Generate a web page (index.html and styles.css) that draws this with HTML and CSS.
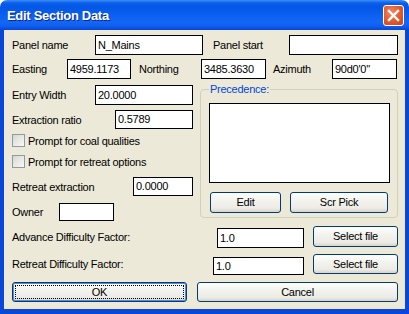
FILE: index.html
```html
<!DOCTYPE html>
<html>
<head>
<meta charset="utf-8">
<link rel="stylesheet" href="styles.css">
</head>
<body>
<div class="window">
  <div class="titlebar">
    <span class="title">Edit Section Data</span>
    <span class="close"><svg width="21" height="21" viewBox="0 0 21 21"><path d="M6 6 L15 15 M15 6 L6 15" stroke="#fff" stroke-width="2.4" stroke-linecap="square"/></svg></span>
  </div>
  <div class="client">
    <div class="row r1">
      <span class="lbl w83">Panel name</span><span class="edit w108 h20">N_Mains</span>
      <span class="lbl ml10 w76">Panel start</span><span class="edit w109 h20"></span>
    </div>
    <div class="row r2">
      <span class="lbl w55">Easting</span><span class="edit w64 h20">4959.1173</span>
      <span class="lbl ml8 w62">Northing</span><span class="edit w65 h20">3485.3630</span>
      <span class="lbl ml7 w59">Azimuth</span><span class="edit w65 h20">90d0'0"</span>
    </div>
    <div class="middle">
      <div class="leftcol">
        <div class="row"><span class="lbl w83">Entry Width</span><span class="edit w98 h20">20.0000</span></div>
        <div class="row mt5"><span class="lbl w103">Extraction ratio</span><span class="edit w78 h19">0.5789</span></div>
        <div class="check mt5"><span class="box"></span><span class="ctext">Prompt for coal qualities</span></div>
        <div class="check mt8"><span class="box"></span><span class="ctext">Prompt for retreat options</span></div>
        <div class="row mt9"><span class="lbl w121">Retreat extraction</span><span class="edit w60 h19">0.0000</span></div>
        <div class="row mt7"><span class="lbl w47">Owner</span><span class="edit w55 h18"></span></div>
      </div>
      <fieldset class="group">
        <legend>Precedence:</legend>
        <div class="listbox"></div>
        <div class="btnrow">
          <span class="btn w71 h21 ml1">Edit</span>
          <span class="btn w98 h21 ml9">Scr Pick</span>
        </div>
      </fieldset>
    </div>
    <div class="row adv">
      <span class="lbl w205 tall">Advance Difficulty Factor:</span>
      <span class="edit w87 h20 down2">1.0</span>
      <span class="btn w85 h21 ml9">Select file</span>
    </div>
    <div class="row ret">
      <span class="lbl w201 tall">Retreat Difficulty Factor:</span>
      <span class="edit w91 h18 down3">1.0</span>
      <span class="btn w85 h20 ml9">Select file</span>
    </div>
    <div class="row okrow">
      <span class="btn default w175 h20">OK</span>
      <span class="btn w201 h20 ml10">Cancel</span>
    </div>
  </div>
</div>
</body>
</html>
```

FILE: styles.css
```css
* { box-sizing: border-box; }
html, body { margin: 0; padding: 0; background: #fff; }
body { font-family: "Liberation Sans", Arial, sans-serif; font-size: 11px; color: #000; }

.window { width: 409px; height: 314px; display: flex; flex-direction: column; }

.titlebar {
  height: 30px;
  display: flex; align-items: center; justify-content: space-between;
  padding: 0 5px 0 7px;
  border-radius: 7px 7px 0 0;
  background: linear-gradient(to bottom, #3d8ffb 0px, #0b5fe9 3px, #0457e6 7px, #0a5fee 14px, #1467f5 22px, #0f5ff0 26px, #0845d6 30px);
}
.title {
  color: #fff; font-weight: bold; font-size: 13px; letter-spacing: -0.3px;
  text-shadow: 1px 1px 0 #0a2a8a;
  margin-top: 1px;
}
.close {
  width: 21px; height: 21px; display: flex;
  border: 1px solid #fff; border-radius: 3px;
  background: radial-gradient(circle at 40% 35%, #f08a64 0%, #e2582c 55%, #c8431c 100%);
  align-items: center; justify-content: center;
}
.close svg { display: block; margin: -1px; }

.client {
  flex: 1;
  background: #ece9d8;
  border-left: 4px solid #0a46d8;
  border-right: 4px solid #0a46d8;
  border-bottom: 5px solid #0a46d8;
  padding: 0 0 0 8px;
  display: flex; flex-direction: column;
  letter-spacing: -0.25px;
}

.row { display: flex; align-items: center; }
.r1 { margin-top: 5px; height: 20px; }
.r2 { margin-top: 4px; height: 20px; }

.lbl { display: block; white-space: nowrap; flex: none; }
.tall { height: 22px; line-height: 22px; align-self: flex-start; }

.edit {
  display: block; flex: none;
  background: #fff; border: 1px solid #000;
  padding-left: 2px; white-space: nowrap;
}
.h18 { height: 18px; line-height: 16px; }
.h19 { height: 19px; line-height: 17px; }
.h20 { height: 20px; line-height: 18px; }
.h21 { height: 21px; line-height: 19px; }

.w47 { width: 47px; } .w55 { width: 55px; } .w59 { width: 59px; } .w60 { width: 60px; }
.w62 { width: 62px; } .w64 { width: 64px; } .w65 { width: 65px; } .w71 { width: 71px; }
.w76 { width: 76px; } .w78 { width: 78px; } .w83 { width: 83px; } .w85 { width: 85px; }
.w87 { width: 87px; } .w91 { width: 91px; } .w98 { width: 98px; } .w103 { width: 103px; }
.w108 { width: 108px; } .w109 { width: 109px; } .w121 { width: 121px; } .w175 { width: 175px; }
.w201 { width: 201px; } .w205 { width: 205px; }

.ml1 { margin-left: 1px; } .ml7 { margin-left: 7px; } .ml8 { margin-left: 8px; }
.ml9 { margin-left: 9px; } .ml10 { margin-left: 10px; }
.mt5 { margin-top: 5px; } .mt7 { margin-top: 7px; } .mt8 { margin-top: 8px; } .mt9 { margin-top: 9px; }
.down2 { align-self: flex-start; margin-top: 2px; }
.down3 { align-self: flex-start; margin-top: 3px; }

.middle { display: flex; margin-top: 4px; align-items: flex-start; }
.leftcol { width: 181px; padding-top: 2px; display: flex; flex-direction: column; }

.check { display: flex; align-items: center; height: 13px; }
.box {
  width: 13px; height: 13px; flex: none;
  border: 1px solid #8d9aa8;
  background: linear-gradient(135deg, #d6d5cf 0%, #e9e8e3 50%, #f8f8f6 100%);
}
.ctext { margin-left: 3px; white-space: nowrap; }

.group {
  margin: 0 0 0 7px; width: 198px; height: 135px;
  border: 1px solid #d0d0bf; border-radius: 4px;
  padding: 0 7px 4px 8px;
  min-width: 0;
}
.group legend {
  color: #0046d5; padding: 0 1px; margin-left: 0;
  line-height: 13px; height: 13px;
}
.listbox {
  margin-top: 7px; width: 181px; height: 80px;
  background: #fff; border: 1px solid #000;
}
.btnrow { display: flex; margin-top: 9px; }

.btn {
  display: flex; align-items: center; justify-content: center; flex: none;
  border: 1px solid #003c74; border-radius: 3px;
  background: linear-gradient(to bottom, #ffffff 0%, #f5f5f1 30%, #ecebe5 80%, #d8d4c8 100%);
  white-space: nowrap;
}
.btn.default {
  box-shadow: inset 0 0 0 1px #5b8ae0;
  outline: 1px dotted #000; outline-offset: -4px;
}

.adv { margin-top: 5px; height: 22px; align-items: flex-start; }
.ret { margin-top: 6px; height: 21px; align-items: flex-start; }
.ret .tall { height: 20px; line-height: 20px; margin-top: 0; }
.okrow { margin-top: 7px; height: 20px; }
```
